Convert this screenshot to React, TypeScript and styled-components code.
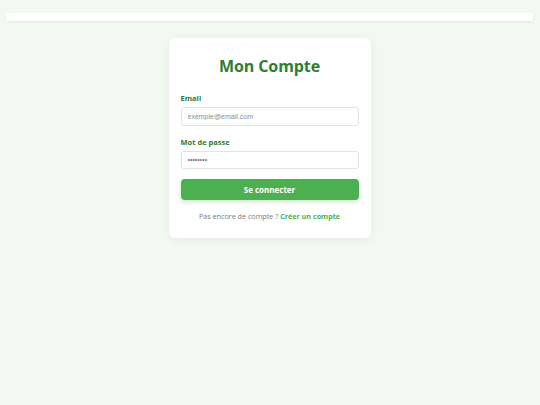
import React from "react";
import styled, { createGlobalStyle } from "styled-components";

const Global = createGlobalStyle`
  html, body { margin: 0; padding: 0; }
  body {
    background: #f3f8f3;
    font-family: "Open Sans", "Noto Sans", sans-serif;
    min-height: 405px;
  }
  * { box-sizing: border-box; }
`;

const Page = styled.div`
  display: flex;
  flex-direction: column;
  align-items: center;
  padding: 13px 7px 0 6px;
`;

const TopBar = styled.header`
  align-self: stretch;
  height: 8px;
  background: #ffffff;
  border-radius: 1px;
  box-shadow: 0 1px 3px rgba(0, 0, 0, 0.08);
`;

const Card = styled.main`
  margin-top: 17px;
  width: 202px;
  background: #ffffff;
  border-radius: 6px;
  box-shadow: 0 2px 10px rgba(0, 0, 0, 0.06);
  padding: 16px 12px 17px;
  display: flex;
  flex-direction: column;
`;

const Title = styled.h1`
  margin: 0 0 15px;
  text-align: center;
  font-size: 16px;
  line-height: 24px;
  font-weight: 700;
  letter-spacing: -0.1px;
  color: #2e7d32;
`;

const Field = styled.div<{ $last?: boolean }>`
  display: flex;
  flex-direction: column;
  gap: 4px;
  margin-bottom: ${(p) => (p.$last ? "10px" : "11px")};
`;

const Label = styled.label`
  font-size: 7.5px;
  line-height: 10px;
  font-weight: 700;
  color: #2e7d32;
`;

const Input = styled.input`
  width: 100%;
  height: 18.5px;
  border: 1px solid #e2e4e2;
  border-radius: 3px;
  padding: 0 6px;
  font-family: "Liberation Sans", Arial, sans-serif;
  font-size: 7px;
  color: #777;
  background: #fff;
  outline: none;
  &::placeholder { color: #8f8f8f; }
`;

const Button = styled.button`
  width: 100%;
  height: 21px;
  border: none;
  border-radius: 4px;
  background: #4caf50;
  color: #ffffff;
  font-family: "Open Sans", sans-serif;
  font-size: 8px;
  font-weight: 700;
  box-shadow: 0 2px 5px rgba(76, 175, 80, 0.3);
  cursor: pointer;
`;

const Footer = styled.p`
  margin: 11px 0 0;
  text-align: center;
  font-size: 7.2px;
  line-height: 10px;
  color: #7a7a7a;
`;

const FooterLink = styled.a`
  color: #4caf50;
  font-weight: 700;
  text-decoration: none;
`;

export default function App() {
  return (
    <>
      <Global />
      <Page>
        <TopBar />
        <Card>
          <Title>Mon Compte</Title>
          <Field>
            <Label htmlFor="email">Email</Label>
            <Input id="email" type="email" placeholder="exemple@email.com" />
          </Field>
          <Field $last>
            <Label htmlFor="pw">Mot de passe</Label>
            <Input id="pw" type="password" defaultValue="12345678" />
          </Field>
          <Button>Se connecter</Button>
          <Footer>
            Pas encore de compte ? <FooterLink href="#">Créer un compte</FooterLink>
          </Footer>
        </Card>
      </Page>
    </>
  );
}
